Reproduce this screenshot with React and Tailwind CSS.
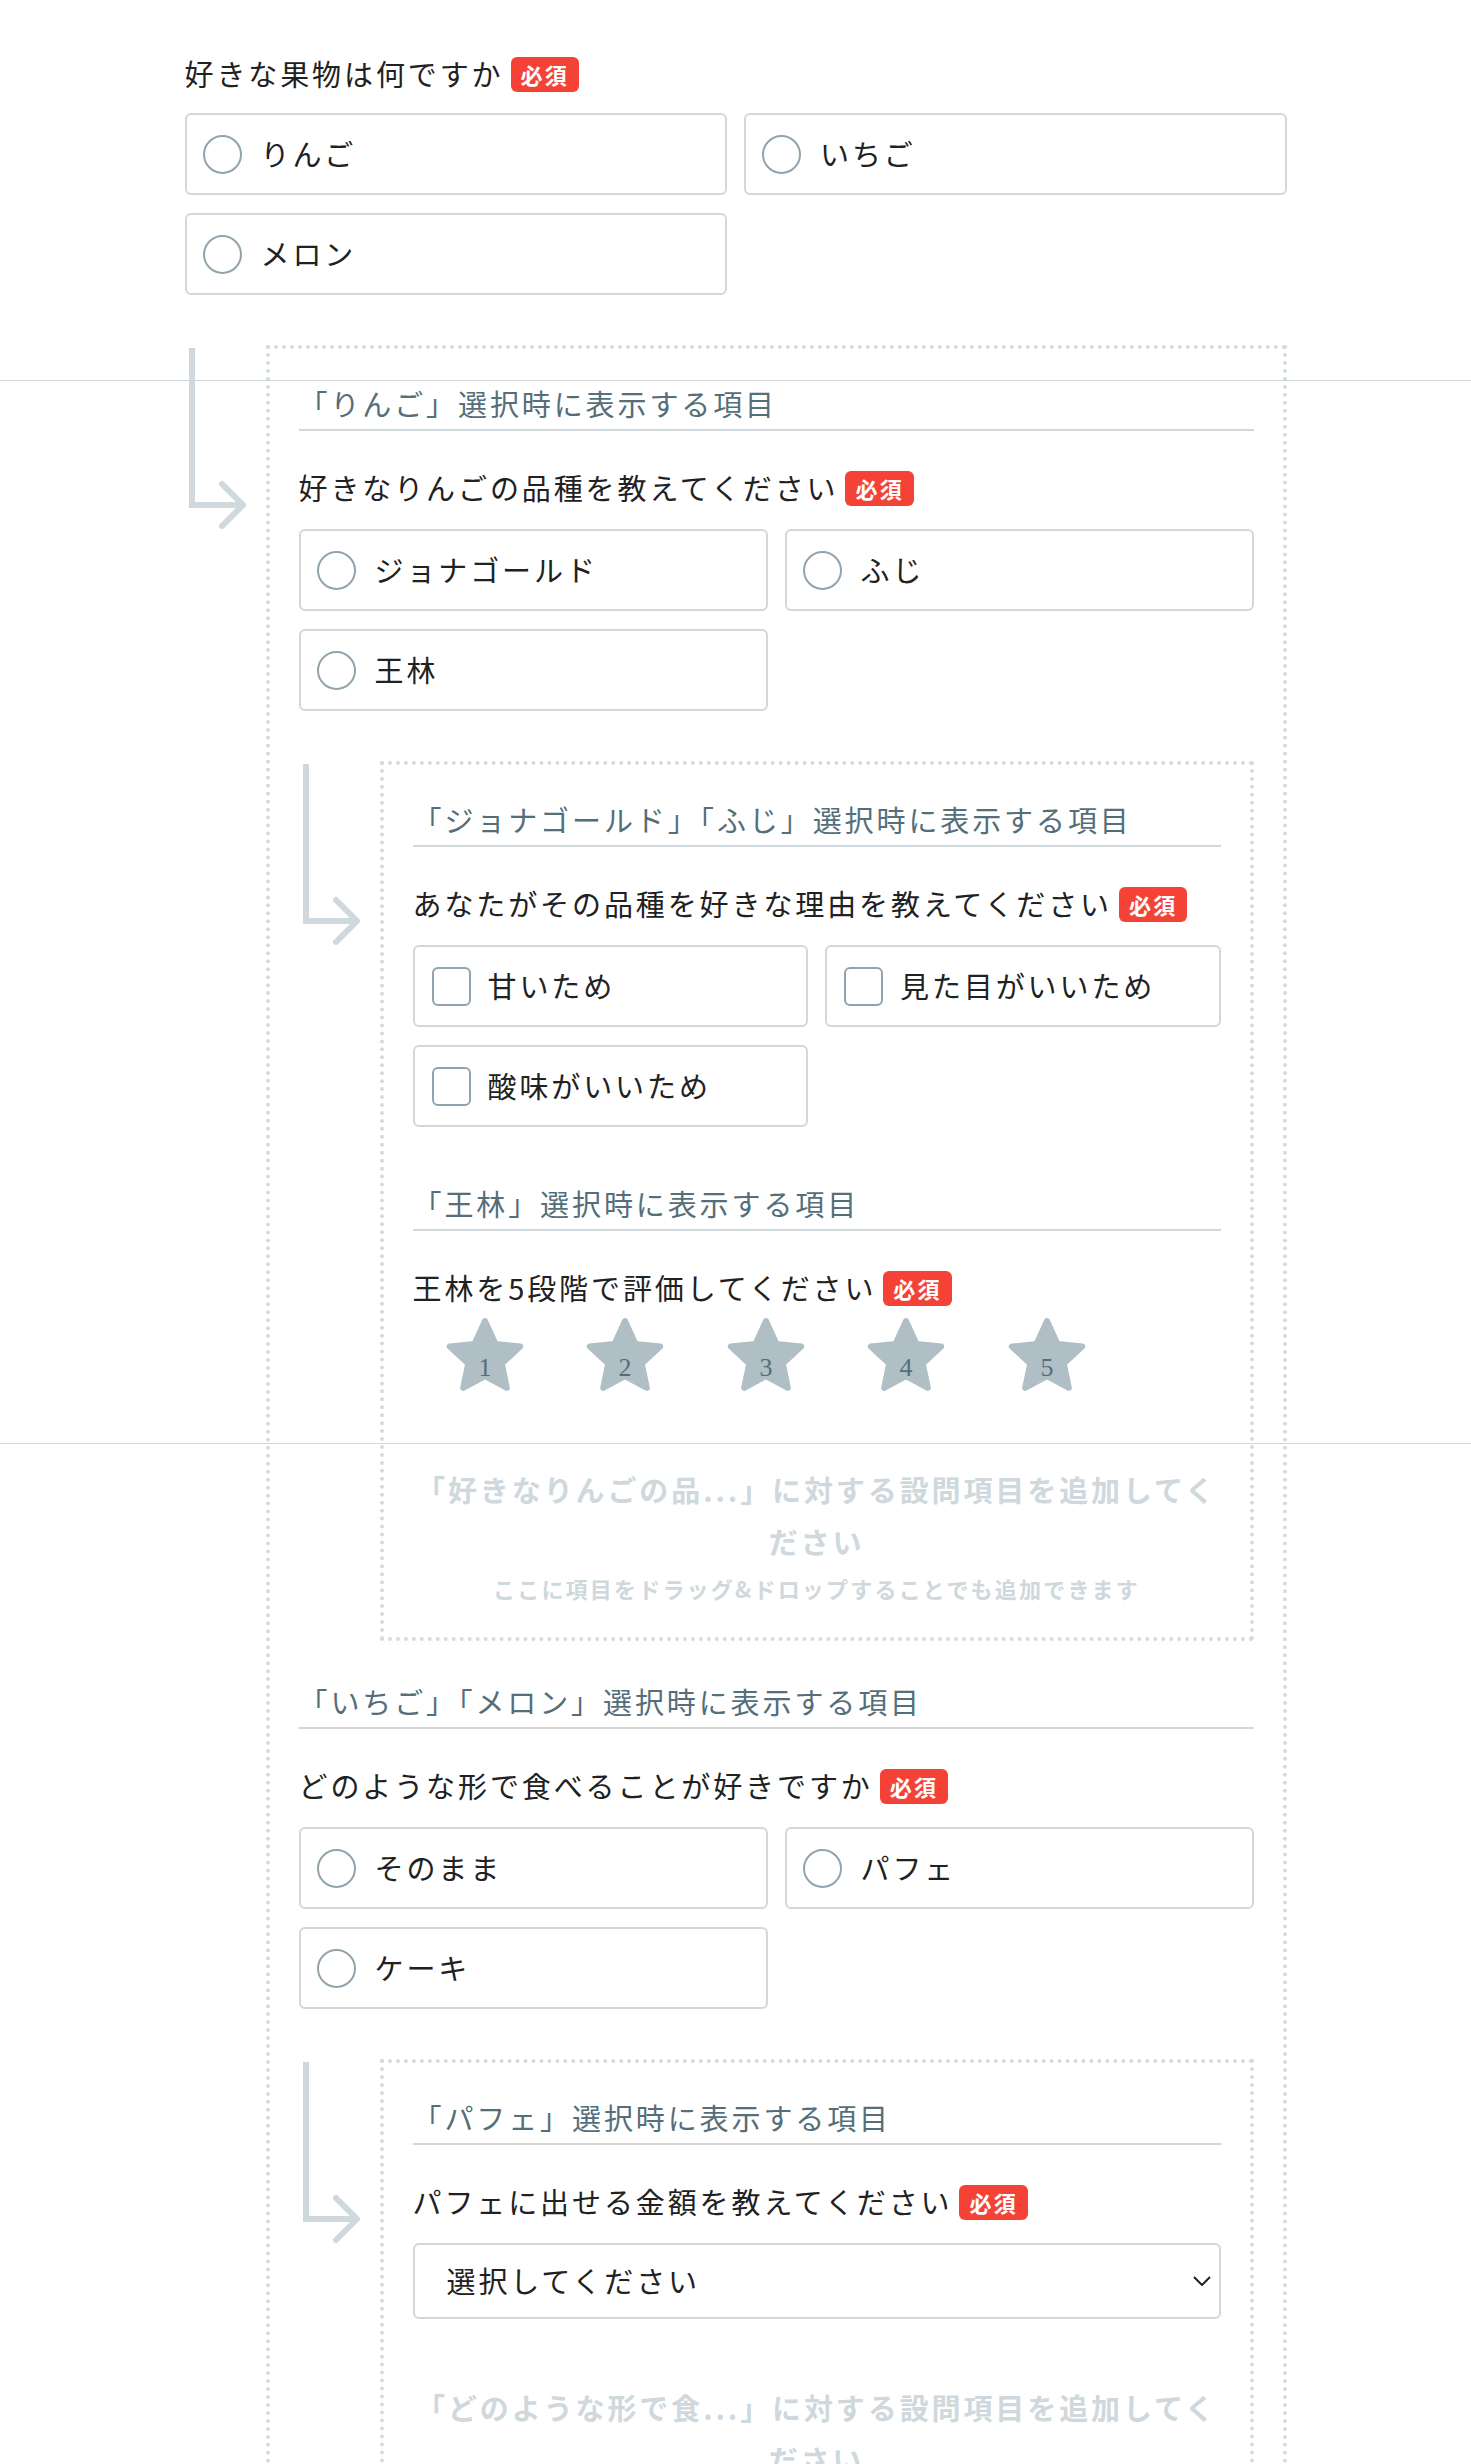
import React from "react";

// Option lists for each question
const fruits = ["りんご", "いちご", "メロン"];
const appleKinds = ["ジョナゴールド", "ふじ", "王林"];
const reasons = ["甘いため", "見た目がいいため", "酸味がいいため"];
const styles = ["そのまま", "パフェ", "ケーキ"];

function Badge() {
  return (
    <span className="ml-[7px] inline-flex h-[35px] items-center rounded-[6px] bg-[#f44336] px-[10px] text-[22px] font-bold tracking-[0.1em] text-white">
      必須
    </span>
  );
}

function QuestionTitle({ children, className = "" }) {
  return (
    <div className={`flex h-[36px] items-center ${className}`}>
      <span className="text-[29px] tracking-[0.1em] text-[#212121]">{children}</span>
      <Badge />
    </div>
  );
}

function Option({ label, type }) {
  return (
    <div
      className={`flex h-[82px] items-center rounded-[6px] border-2 border-[#d6d6d6] bg-white ${
        type === "checkbox" ? "gap-[17px] pl-[17px]" : "gap-[19px] pl-[16px]"
      }`}
    >
      {type === "checkbox" ? (
        <span className="h-[39px] w-[39px] shrink-0 rounded-[6px] border-2 border-[#90a4ae]" />
      ) : (
        <span className="h-[39px] w-[39px] shrink-0 rounded-full border-2 border-[#90a4ae]" />
      )}
      <span className="text-[29px] tracking-[0.1em] text-[#212121]">{label}</span>
    </div>
  );
}

function Options({ items, type = "radio" }) {
  return (
    <div className="mt-[23px] grid grid-cols-2 gap-x-[17px] gap-y-[18px]">
      {items.map((item) => (
        <Option key={item} label={item} type={type} />
      ))}
    </div>
  );
}

function SectionHeading({ children, className = "" }) {
  return (
    <div
      className={`border-b-2 border-[#cfd8dc] pb-[6px] text-[29px] leading-[40px] tracking-[0.1em] text-[#546e7a] ${className}`}
    >
      {children}
    </div>
  );
}

function BranchArrow() {
  return (
    <div className="w-[81px] shrink-0">
      <svg width="70" height="190" viewBox="0 0 70 190" fill="none" stroke="#cfd8dc" strokeWidth="6">
        <path d="M7 3 V160 H56" />
        <path d="M37 139 L58 160 L37 181" strokeLinecap="round" strokeLinejoin="round" />
      </svg>
    </div>
  );
}

function Branch({ children }) {
  return (
    <div className="mt-[50px] flex">
      <BranchArrow />
      <div className="min-w-0 flex-1 border-4 border-dotted border-[#d3dbdf] px-[29px] pb-[31px] pt-[34px]">
        {children}
      </div>
    </div>
  );
}

function DropHint({ question, className = "" }) {
  return (
    <div className={`text-center font-bold text-[#cfd8dc] ${className}`}>
      <p className="text-[29px] leading-[52px] tracking-[0.1em]">
        「{question}」に対する設問項目を追加してください
      </p>
      <p className="mt-[3px] text-[22px] leading-[36px] tracking-[0.1em]">
        ここに項目をドラッグ&ドロップすることでも追加できます
      </p>
    </div>
  );
}

function Star({ n }) {
  return (
    <div className="flex w-[140.5px] justify-center">
      <svg width="80" height="80" viewBox="0 0 80 80">
        <polygon
          points="40,8 50.5,31 75.2,33.6 56.8,50.5 61.8,74.9 40,63 18.2,74.9 23.2,50.5 4.8,33.6 29.5,31"
          fill="#b0bec5"
          stroke="#b0bec5"
          strokeWidth="6"
          strokeLinejoin="round"
        />
        <text
          x="40"
          y="63"
          textAnchor="middle"
          fontSize="26"
          fill="#546e7a"
          fontFamily="'Liberation Serif', serif"
        >
          {n}
        </text>
      </svg>
    </div>
  );
}

export default function App() {
  return (
    <div
      className="relative min-h-screen overflow-hidden bg-white"
      style={{ fontFamily: "'Noto Sans CJK JP', 'Noto Sans', sans-serif" }}
    >
      {/* thin full-width rules that lie across the page */}
      <div className="pointer-events-none absolute left-0 right-0 top-[380px] z-10 h-px bg-[#cfd8dc]" />
      <div className="pointer-events-none absolute left-0 right-0 top-[1443px] z-10 h-px bg-[#cfd8dc]" />

      <div className="mx-auto w-[1102px] pb-[200px] pt-[56px]">
        <QuestionTitle>好きな果物は何ですか</QuestionTitle>
        <div className="-mt-[2px]">
          <Options items={fruits} />
        </div>

        <Branch>
          <SectionHeading>「りんご」選択時に表示する項目</SectionHeading>
          <QuestionTitle className="mt-[39px]">好きなりんごの品種を教えてください</QuestionTitle>
          <Options items={appleKinds} />

          <Branch>
            <SectionHeading>「ジョナゴールド」「ふじ」選択時に表示する項目</SectionHeading>
            <QuestionTitle className="mt-[39px]">あなたがその品種を好きな理由を教えてください</QuestionTitle>
            <Options items={reasons} type="checkbox" />

            <SectionHeading className="mt-[56px]">「王林」選択時に表示する項目</SectionHeading>
            <QuestionTitle className="mt-[39px]">王林を5段階で評価してください</QuestionTitle>
            <div className="mt-[7px] flex pl-[2px]">
              {[1, 2, 3, 4, 5].map((n) => (
                <Star key={n} n={n} />
              ))}
            </div>

            <DropHint question="好きなりんごの品..." className="mt-[70px]" />
          </Branch>

          <SectionHeading className="mt-[40px]">「いちご」「メロン」選択時に表示する項目</SectionHeading>
          <QuestionTitle className="mt-[39px]">どのような形で食べることが好きですか</QuestionTitle>
          <Options items={styles} />

          <Branch>
            <SectionHeading>「パフェ」選択時に表示する項目</SectionHeading>
            <QuestionTitle className="mt-[39px]">パフェに出せる金額を教えてください</QuestionTitle>
            <div className="mt-[23px] flex h-[76px] items-center justify-between rounded-[6px] border-2 border-[#d6d6d6] pl-[32px] pr-[8px]">
              <span className="text-[29px] tracking-[0.1em] text-[#212121]">選択してください</span>
              <svg width="18" height="10" viewBox="0 0 18 10" fill="none" stroke="#212121" strokeWidth="2">
                <path d="M1 1 L9 9 L17 1" />
              </svg>
            </div>

            <DropHint question="どのような形で食..." className="mt-[62px]" />
          </Branch>

          <DropHint question="好きな果物は何で..." className="mt-[60px]" />
        </Branch>
      </div>
    </div>
  );
}
